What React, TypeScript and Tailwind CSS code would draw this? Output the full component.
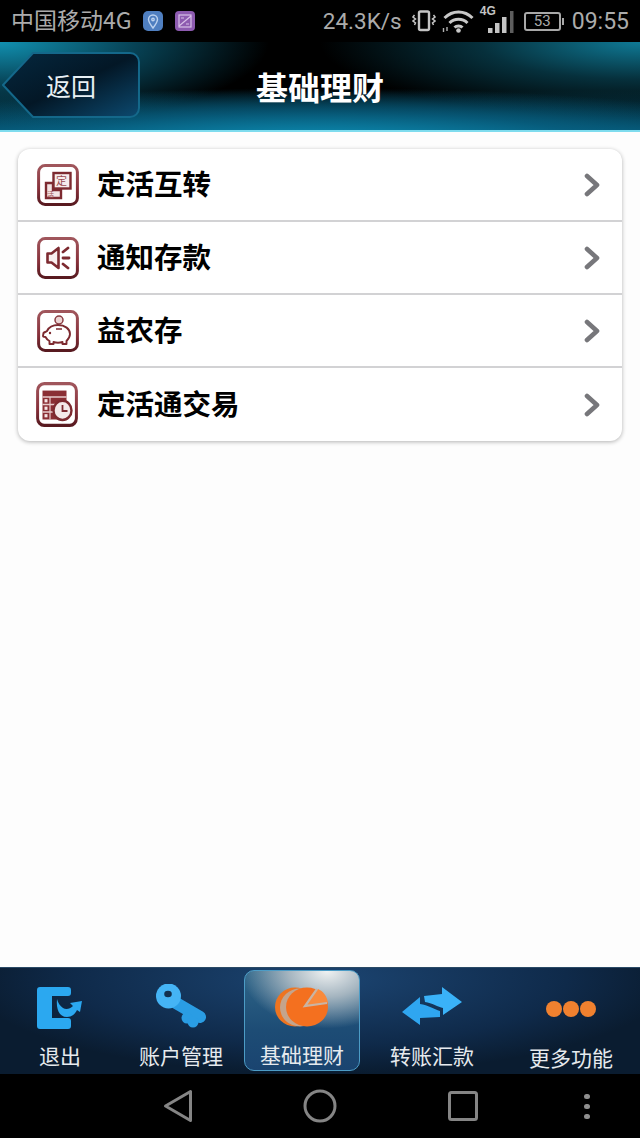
import React from "react";

const cjk = "font-['Noto_Sans_CJK_SC','Noto_Sans',sans-serif]";

function IconFrame({ children, h = 42 }: { children: React.ReactNode; h?: number }) {
  return (
    <svg width="42" height={h} viewBox="0 0 42 42" preserveAspectRatio="none" className="shrink-0">
      <defs>
        <linearGradient id="fr" x1="0" y1="0" x2="0" y2="1">
          <stop offset="0" stopColor="#a0565c" />
          <stop offset="0.6" stopColor="#87303a" />
          <stop offset="1" stopColor="#581a20" />
        </linearGradient>
      </defs>
      <rect x="1.6" y="1.6" width="38.8" height="38.8" rx="6.5" fill="#fff" stroke="url(#fr)" strokeWidth="3" />
      {children}
    </svg>
  );
}

const rows: { label: string; icon: React.ReactNode; offset?: boolean }[] = [
  {
    label: "定活互转",
    icon: (
      <IconFrame>
        <path d="M9 19h7v7h8v8H9z" fill="#f3e4e4" stroke="#7d2a30" strokeWidth="2.4" />
        <rect x="16.5" y="9" width="17" height="15.5" fill="#f6ecec" stroke="#7d2a30" strokeWidth="2.4" />
        <text x="19" y="21" fontSize="11" fill="#9a4a50" fontFamily="'Noto Sans CJK SC',sans-serif">定</text>
        <text x="10" y="33" fontSize="7" fill="#9a4a50" fontFamily="'Noto Sans CJK SC',sans-serif">活</text>
      </IconFrame>
    ),
  },
  {
    label: "通知存款",
    icon: (
      <IconFrame>
        <path d="M10.5 16.5h4l7-5.5v20l-7-5.5h-4z" fill="#f8eeee" stroke="#7d2a30" strokeWidth="2.6" strokeLinejoin="round" />
        <path d="M26 15l5-4M26 21h6M26 27l5 4" stroke="#7d2a30" strokeWidth="2.8" strokeLinecap="round" fill="none" />
      </IconFrame>
    ),
  },
  {
    label: "益农存",
    icon: (
      <IconFrame>
        <circle cx="22" cy="10" r="4" fill="#ecd4d4" stroke="#8a3a40" strokeWidth="1.5" />
        <path d="M6.5 23c1-1 2.500-1 3.500-2 2-4 6-6 11-6 7 0 12 4 12 9 0 3-1.500 5-3.500 7v3h-4v-2c-3 1-6 1-9 0v2h-4v-3c-2-1-3-2-4-4-1 0-2.500 0-2.500-1z" fill="#fff" stroke="#7d2a30" strokeWidth="1.9" strokeLinejoin="round" />
        <circle cx="13" cy="23" r="1.2" fill="#7d2a30" />
        <path d="M19 19h6" stroke="#7d2a30" strokeWidth="1.5" />
      </IconFrame>
    ),
  },
  {
    label: "定活通交易",
    offset: true,
    icon: (
      <IconFrame h={45}>
        <rect x="6.500" y="8" width="24" height="27" fill="#8a2e34" />
        <path d="M6.500 14h24M6.500 21h14M6.500 28h12M14 14v21" stroke="#e6caca" strokeWidth="1.200" />
        <rect x="8.500" y="16" width="3" height="3" fill="#f6e6e6" />
        <rect x="8.500" y="23" width="3" height="3" fill="#f6e6e6" />
        <rect x="8.500" y="30" width="3" height="3" fill="#f6e6e6" />
        <circle cx="26.500" cy="26.500" r="9" fill="#f3e8e8" stroke="#7d2a30" strokeWidth="2.400" />
        <path d="M26.500 21.500V27h5" stroke="#7d2a30" strokeWidth="1.800" fill="none" />
      </IconFrame>
    ),
  },
];

function Chevron() {
  return (
    <svg width="18" height="24" viewBox="0 0 18 24">
      <path d="M4 3l10 9-10 9" fill="none" stroke="#77777b" strokeWidth="4.600" strokeLinejoin="round" strokeLinecap="round" />
    </svg>
  );
}

function StatusIcons() {
  return (
    <>
      {/* vibrate */}
      <svg width="24" height="24" viewBox="0 0 24 24" className="ml-[10px]" fill="none" stroke="#c4c4c4">
        <rect x="7" y="2.500" width="10" height="18.500" rx="1.500" strokeWidth="2.400" />
        <path d="M2.500 6l-1.500 2 2.500 2-2.500 2 2.500 2-1 2" strokeWidth="1.500" />
        <path d="M21.500 6l1.500 2-2.500 2 2.500 2-2.500 2 1 2" strokeWidth="1.500" />
      </svg>
      {/* wifi */}
      <svg width="32" height="24" viewBox="0 0 32 24" className="ml-[6px]" fill="none" stroke="#c8c8c8" strokeWidth="3">
        <path d="M2.500 9c8-8 20-8 28 0M7.500 14c5-5 13-5 18 0M12.500 18.500c2-2 6-2 8 0" />
        <circle cx="16.500" cy="21.500" r="2.300" fill="#c8c8c8" stroke="none" />
        <path d="M1.500 19v4M5 18v4" stroke="#b0b0b0" strokeWidth="1.400" />
      </svg>
      {/* signal */}
      <div className="relative ml-[5px] w-[35px] h-[26px]">
        <svg width="35" height="26" viewBox="0 0 35 26" fill="#c4c4c4">
          <rect x="9" y="20" width="4.500" height="5" />
          <rect x="16" y="15" width="4.500" height="10" />
          <rect x="23" y="9" width="4.500" height="16" />
          <rect x="31" y="3" width="3.500" height="22" fill="#5e5e5e" />
        </svg>
        <span className="absolute left-[1px] top-[-3px] text-[12px] leading-[12px] font-bold text-[#c4c4c4] font-['Liberation_Sans',sans-serif]">4G</span>
      </div>
      {/* battery */}
      <div className="ml-[10px] flex items-center">
        <div className="w-[37px] h-[19px] border-2 border-[#a8a8a8] rounded-[3px] flex items-center justify-center text-[#a8a8a8] text-[15px] leading-none font-['Roboto',sans-serif]">
          53
        </div>
        <div className="w-[2px] h-[7px] bg-[#a8a8a8] ml-[1px]" />
      </div>
    </>
  );
}

function Tab({ label, width, active, children, lower }: { label: string; width: string; active?: boolean; children: React.ReactNode; lower?: boolean }) {
  return (
    <div
      className={`${width} flex flex-col items-center h-[101px] shrink-0 ${
        active
          ? "ml-[2px] rounded-[10px] border border-[#4c9cc6] bg-[radial-gradient(ellipse_75%_58%_at_72%_0%,#f0f2f2_0%,#a5b5c0_45%,transparent_100%),linear-gradient(to_bottom,#2f6689_0%,#1d4c75_60%,#1a4470_100%)]"
          : ""
      }`}
    >
      <div className={`${active ? "h-[70px]" : "h-[72px]"} flex items-center justify-center shrink-0`}>{children}</div>
      <span className={`text-[21px] leading-[24px] text-[#e6eaee] whitespace-nowrap ${lower ? "mt-[3px]" : "mt-[1px]"}`}>{label}</span>
    </div>
  );
}

export default function App() {
  return (
    <div className={`w-[640px] h-[1138px] flex flex-col bg-[#fdfdfd] overflow-hidden ${cjk}`}>
      {/* status bar */}
      <div className="h-[42px] shrink-0 bg-black flex items-center justify-between pl-[11px] pr-[11px] text-[#ababab]">
        <div className="flex items-center">
          <span className="text-[23px] leading-none mb-[4px]">中国移动4G</span>
          <div className="ml-[11px] w-[20px] h-[20px] rounded-[5px] bg-[#4f7fc0] flex items-center justify-center">
            <svg width="12" height="15" viewBox="0 0 12 15" fill="none" stroke="#bcd2ee" strokeWidth="1.400">
              <path d="M6 14C3 10 1.500 8 1.500 5.500a4.500 4.500 0 019 0C10.500 8 9 10 6 14z" />
              <circle cx="6" cy="5.500" r="1.200" />
            </svg>
          </div>
          <div className="ml-[12px] w-[20px] h-[20px] rounded-[4px] bg-[#8d5bb0] flex items-center justify-center">
            <svg width="14" height="14" viewBox="0 0 14 14" fill="none" stroke="#d8c0e8" strokeWidth="1.200">
              <rect x="1" y="1" width="12" height="12" />
              <path d="M1 12L13 2M3 4h3M8 10h3" />
            </svg>
          </div>
        </div>
        <div className="flex items-center">
          <span className="text-[22.500px] leading-none font-['Roboto',sans-serif]">24.3K/s</span>
          <StatusIcons />
          <span className="ml-[8px] text-[23px] leading-none font-['Roboto',sans-serif]">09:55</span>
        </div>
      </div>

      {/* header */}
      <div className="relative h-[90px] shrink-0 flex items-center justify-center border-b-2 border-[#7fdcee] bg-[radial-gradient(ellipse_75%_60%_at_50%_112%,#0d8fb5_0%,rgba(8,100,135,0.7)_55%,transparent_100%),radial-gradient(ellipse_42%_95%_at_0%_0%,#1190b0_0%,rgba(10,95,122,0.7)_50%,transparent_100%),radial-gradient(ellipse_50%_85%_at_100%_0%,#0f7a96_0%,rgba(10,80,100,0.6)_50%,transparent_100%),linear-gradient(to_bottom,#000_0%,#000_55%,#04506c_100%)]">
        <div className="absolute left-[2px] top-[9px] w-[138px] h-[68px] flex items-center">
          <svg width="138" height="68" viewBox="0 0 138 68" className="absolute left-0 top-0">
            <defs>
              <linearGradient id="bk" x1="0" y1="0" x2="1" y2="1">
                <stop offset="0" stopColor="#05283f" />
                <stop offset="0.5" stopColor="#031726" />
                <stop offset="1" stopColor="#0c4a70" />
              </linearGradient>
            </defs>
            <path d="M1 34L31 2H128a9 9 0 019 9V57a9 9 0 01-9 9H31z" fill="url(#bk)" stroke="#14688a" strokeWidth="2" />
          </svg>
          <span className="relative ml-[44px] text-[25px] leading-none text-[#e8f0f4]">返回</span>
        </div>
        <h1 className="text-[32px] leading-none font-bold text-white">基础理财</h1>
      </div>

      {/* content */}
      <div className="flex-1 px-[18px] pt-[17px]">
        <div className="rounded-[12px] bg-white shadow-[0_1px_4px_rgba(0,0,0,0.3)] overflow-hidden">
          {rows.map((r, i) => (
            <div
              key={r.label}
              className={`h-[73px] flex items-center pr-[21px] ${r.offset ? "pl-[18px]" : "pl-[19px]"} ${i < rows.length - 1 ? "border-b-2 border-[#d2d2d4]" : ""}`}
            >
              <div className="flex items-center flex-1">
                {r.icon}
                <span className={`${r.offset ? "ml-[19px]" : "ml-[18px]"} mb-[3px] text-[28.500px] leading-none font-bold text-black`}>{r.label}</span>
              </div>
              <Chevron />
            </div>
          ))}
        </div>
      </div>

      {/* tab bar */}
      <div className="h-[107px] shrink-0 flex items-start pt-[2px] border-t border-[#2a4a66] bg-[radial-gradient(ellipse_55%_90%_at_50%_10%,#1c4572_0%,#0f2a4a_70%,#0a1c30_100%)]">
        <Tab label="退出" width="w-[120px]">
          <svg width="46" height="42" viewBox="0 0 46 42" className="mt-[3px]">
            <path d="M3 0h28a3 3 0 013 3v3a3 3 0 01-3 3H15v22h16a3 3 0 013 3v5a3 3 0 01-3 3H3a3 3 0 01-3-3V3a3 3 0 013-3z" fill="#2ba8f0" />
            <path d="M20 12C19 22 22 30 30 30C35 30 38 27 40 23L43 25L45 14L33 16L36 19C33 22 29 23 26 21C23 19 21 16 20 12z" fill="#2ba8f0" />
          </svg>
        </Tab>
        <Tab label="账户管理" width="w-[122px]">
          <svg width="50" height="44" viewBox="0 0 50 44">
            <path d="M20 19L44 33" stroke="#2a9de4" strokeWidth="12" strokeLinecap="round" fill="none" />
            <circle cx="31" cy="34" r="5.500" fill="#2a9de4" />
            <circle cx="37" cy="38" r="5.500" fill="#2a9de4" />
            <circle cx="12.500" cy="12" r="12.500" fill="#45b4f5" />
            <ellipse cx="12" cy="10" rx="3.800" ry="3.200" fill="#12304f" />
          </svg>
        </Tab>
        <Tab label="基础理财" width="w-[116px]" active>
          <svg width="54" height="40" viewBox="0 0 54 40" className="mt-[2px]">
            <ellipse cx="20" cy="20" rx="20" ry="19.500" fill="#ee7420" />
            <ellipse cx="25" cy="20.500" rx="20" ry="19" fill="#c4a48c" />
            <ellipse cx="32" cy="20" rx="21" ry="19.500" fill="#f4701f" />
            <path d="M30 19L43 2c5 2 9 7 10 14z" fill="#f98a3c" />
            <path d="M42 2L30 19L52 16" fill="none" stroke="#c9b4a4" strokeWidth="2.200" />
          </svg>
        </Tab>
        <Tab label="转账汇款" width="w-[144px]">
          <svg width="60" height="38" viewBox="0 0 60 38">
            <path d="M40 0L60 15L41 28V21C36 20 30 16 23 15L22 9L40 7z" fill="#3ab2f8" />
            <path d="M0 25L18 10V17C26 18 32 22 38 24V30L18 31V38z" fill="#2fa6f0" />
          </svg>
        </Tab>
        <Tab label="更多功能" width="w-[134px]" lower>
          <svg width="52" height="18" viewBox="0 0 52 18" className="mt-[5px]">
            <circle cx="9" cy="9" r="8" fill="#f0812f" />
            <circle cx="26" cy="9" r="8" fill="#f0812f" />
            <circle cx="43" cy="9" r="8" fill="#f0812f" />
          </svg>
        </Tab>
      </div>

      {/* android nav */}
      <div className="h-[64px] shrink-0 bg-black flex items-center pl-[163px]">
        <svg width="30" height="34" viewBox="0 0 30 34" fill="none" stroke="#858585" strokeWidth="3" strokeLinejoin="round">
          <path d="M27.500 2.500v29L2.500 17z" />
        </svg>
        <svg width="34" height="34" viewBox="0 0 34 34" fill="none" stroke="#858585" strokeWidth="3" className="ml-[110px]">
          <circle cx="17" cy="17" r="15" />
        </svg>
        <svg width="30" height="30" viewBox="0 0 30 30" fill="none" stroke="#858585" strokeWidth="3" className="ml-[111px]">
          <rect x="1.500" y="1.500" width="27" height="27" rx="2" />
        </svg>
        <div className="ml-[106px] flex flex-col gap-[5px]">
          <div className="w-[6px] h-[5px] rounded-full bg-[#8f8f8f]" />
          <div className="w-[6px] h-[5px] rounded-full bg-[#8f8f8f]" />
          <div className="w-[6px] h-[5px] rounded-full bg-[#8f8f8f]" />
        </div>
      </div>
    </div>
  );
}
